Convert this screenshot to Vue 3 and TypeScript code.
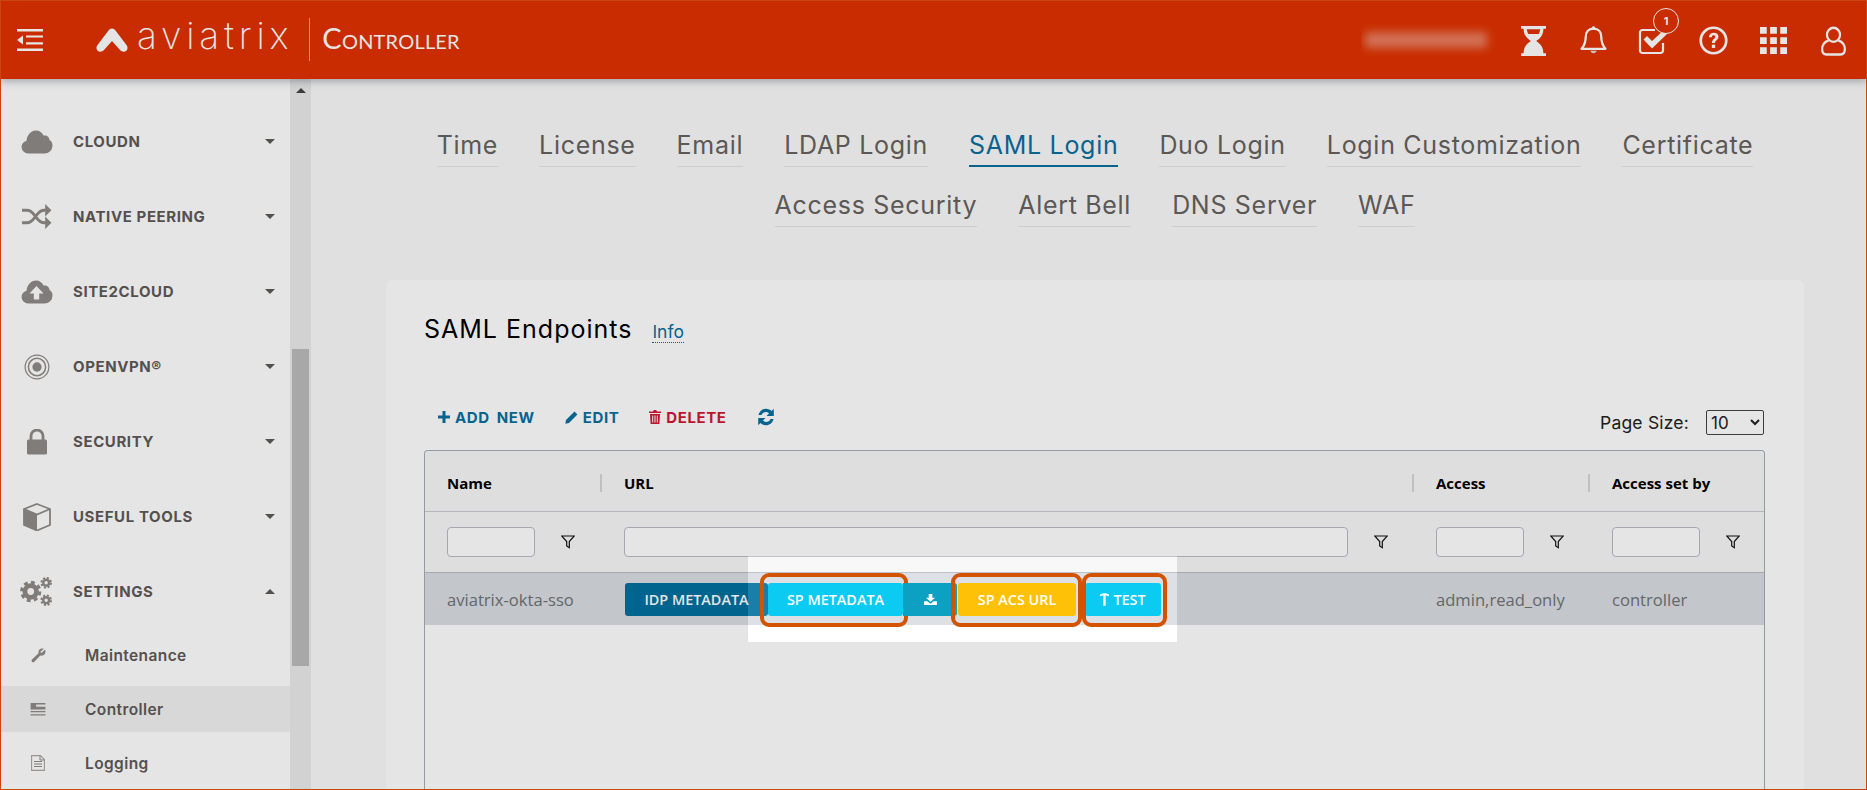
<script setup lang="ts">
const menu = [
  { label: 'CLOUDN', icon: 'cloud', open: false },
  { label: 'NATIVE PEERING', icon: 'shuffle', open: false },
  { label: 'SITE2CLOUD', icon: 'upload', open: false },
  { label: 'OPENVPN®', icon: 'target', open: false },
  { label: 'SECURITY', icon: 'lock', open: false },
  { label: 'USEFUL TOOLS', icon: 'cube', open: false },
  { label: 'SETTINGS', icon: 'gears', open: true },
]
const subs = [
  { label: 'Maintenance', icon: 'wrench', active: false },
  { label: 'Controller', icon: 'server', active: true },
  { label: 'Logging', icon: 'file', active: false },
]
const tabRows = [
  ['Time', 'License', 'Email', 'LDAP Login', 'SAML Login', 'Duo Login', 'Login Customization', 'Certificate'],
  ['Access Security', 'Alert Bell', 'DNS Server', 'WAF'],
]
const columns = ['Name', 'URL', 'Access', 'Access set by']
const filters = [
  { key: 'name', cls: 'short' },
  { key: 'url', cls: 'long' },
  { key: 'access', cls: 'short' },
  { key: 'by', cls: 'short' },
]
</script>

<template>
  <div class="root">
    <header class="topbar">
      <svg class="burger" viewBox="0 0 26 22" width="26" height="22">
        <path d="M0 0h26v2.400H0zM0 19.600h26V22H0zM9 6.400h17v2.200H9zM9 13.200h17v2.200H9z" fill="#fff" />
        <path d="M0 11 6 6.600v8.800z" fill="#fff" />
      </svg>
      <svg class="logomark" viewBox="0 0 32 24" width="32" height="24">
        <path d="M16 .5c1.500 0 2.500.8 3.500 2L30.500 17c3.500 5-2.500 9-6.500 5L16 13l-8 9c-4 4-10 0-6.500-5L12.500 2.500c1-1.200 2-2 3.500-2z" fill="#fff" />
      </svg>
      <span class="wordmark">aviatrix</span>
      <span class="divider"></span>
      <span class="product">Controller</span>
      <div class="blurred"><i></i></div>
      <div class="actions">
        <svg viewBox="0 0 24 28" width="25" height="30" preserveAspectRatio="none" class="act">
          <path d="M0 0h24v2.500h-2.500c0 6-3 9-7 11.500 4 2.500 7 5.500 7 11.500H24V28H0v-2.500h2.500c0-6 3-9 7-11.500-4-2.500-7-5.500-7-11.500H0z" fill="#fff" />
          <path d="M5.500 3c.3 1.800.8 3.200 1.500 4.500h10c.7-1.300 1.200-2.700 1.500-4.500z" fill="#df3200" />
        </svg>
        <svg viewBox="0 0 26 28" width="27" height="29" class="act">
          <path d="M13 2.500c-5 0-7.500 3.500-7.500 8 0 6-2 9-4 11.500h23c-2-2.500-4-5.500-4-11.500 0-4.500-2.500-8-7.500-8z" fill="none" stroke="#fff" stroke-width="2.200" stroke-linejoin="round" />
          <circle cx="13" cy="2" r="1.800" fill="#fff" />
          <path d="M10 24h6c-.5 3-5.500 3-6 0z" fill="#ddd" />
        </svg>
        <div class="checkwrap">
          <svg viewBox="0 0 30 28" width="30" height="28" class="act">
            <path d="M17 3H4.500A2.500 2.500 0 0 0 2 5.500v18A2.500 2.500 0 0 0 4.500 26h18a2.500 2.500 0 0 0 2.500-2.500V16" fill="none" stroke="#fff" stroke-width="2.200" />
            <path d="M5.500 12.500 9 9l5 5L26 3l3.500 3.500L14 21.500z" fill="#fff" />
          </svg>
          <span class="badge">1</span>
        </div>
        <svg viewBox="0 0 28 28" width="29" height="29" class="act">
          <circle cx="14" cy="14" r="12.300" fill="none" stroke="#fff" stroke-width="2.600" />
          <path d="M9.500 10.800c.3-3 2.300-4.300 4.800-4.300 2.700 0 4.500 1.600 4.500 3.800 0 3.200-3.300 3.300-3.300 6h-3c0-3.800 3.100-4 3.100-5.800 0-1-.8-1.500-1.500-1.500-1 0-1.500.6-1.700 1.800z" fill="#fff" />
          <rect x="12.400" y="18" width="3.200" height="3.200" fill="#fff" />
        </svg>
        <svg viewBox="0 0 26 26" width="27" height="27" class="act">
          <path fill="#fff" d="M0 0h6.500v6.500H0zM9.750 0h6.500v6.500h-6.500zM19.500 0H26v6.500h-6.500zM0 9.750h6.500v6.500H0zM9.750 9.750h6.500v6.500h-6.500zM19.500 9.750H26v6.500h-6.500zM0 19.500h6.500V26H0zM9.750 19.500h6.500V26h-6.500zM19.500 19.500H26V26h-6.500z" />
        </svg>
        <svg viewBox="0 0 26 29" width="25" height="30" preserveAspectRatio="none" class="act">
          <circle cx="13" cy="8.500" r="6.800" fill="none" stroke="#fff" stroke-width="2.300" />
          <path d="M8 14C3.500 15.500 1.200 18.500 1.200 22.500c0 3 1.500 5 4.500 5h14.600c3 0 4.500-2 4.500-5 0-4-2.300-7-6.800-8.500" fill="none" stroke="#fff" stroke-width="2.300" />
        </svg>
      </div>
    </header>

    <div class="body">
      <aside class="side">
        <nav class="menu">
          <div v-for="m in menu" :key="m.label" class="item">
            <span class="ic">
              <svg v-if="m.icon === 'cloud'" viewBox="0 0 32 24" width="32" height="24"><path d="M7 23.500a6.500 6.500 0 0 1-1.500-12.800C6 5 10 .5 15 .5c3.500 0 6.300 2 7.500 5 3.500-.5 6 1.700 6 4.500 2 1 3 3 3 5.500a8 8 0 0 1-8 8z" fill="#8f8b87" /></svg>
              <svg v-else-if="m.icon === 'shuffle'" viewBox="0 0 32 28" width="31" height="27"><path d="M1 7.500h5c5 0 6.500 3.500 9 6.500s4 6.500 9 6.500h2M1 20.500h5c5 0 6.500-3.500 9-6.500s4-6.500 9-6.500h2" fill="none" stroke="#8f8b87" stroke-width="3" /><path d="M25 1l6.500 6.500L25 14zM25 14l6.500 6.500L25 27z" fill="#8f8b87" /></svg>
              <svg v-else-if="m.icon === 'upload'" viewBox="0 0 32 24" width="32" height="24"><path d="M7 23.500a6.500 6.500 0 0 1-1.500-12.800C6 5 10 .5 15 .5c3.500 0 6.300 2 7.500 5 3.500-.5 6 1.700 6 4.500 2 1 3 3 3 5.500a8 8 0 0 1-8 8z" fill="#8f8b87" /><path d="M15.500 6l7 7.500h-4.300v6h-5.400v-6H8.500z" fill="#fff" /></svg>
              <svg v-else-if="m.icon === 'target'" viewBox="0 0 28 28" width="26" height="26"><circle cx="14" cy="14" r="12.800" fill="none" stroke="#8f8b87" stroke-width="1.300" /><circle cx="14" cy="14" r="9.300" fill="none" stroke="#8f8b87" stroke-width="1.600" /><circle cx="14" cy="14" r="5" fill="#8f8b87" /></svg>
              <svg v-else-if="m.icon === 'lock'" viewBox="0 0 20 26" width="20" height="26"><path d="M4 11V7a6 6 0 0 1 12 0v4" fill="none" stroke="#8f8b87" stroke-width="2.800" /><rect x="0" y="10.500" width="20" height="15" rx="1.500" fill="#8f8b87" /></svg>
              <svg v-else-if="m.icon === 'cube'" viewBox="0 0 28 28" width="28" height="28"><path d="M14 1 27 6v16l-13 5.500L1 22V6z" fill="none" stroke="#8f8b87" stroke-width="1.800" /><path d="M1 6l13 5.500V27.500L1 22z" fill="#8f8b87" /><path d="M1 6l13 5.500L27 6" fill="none" stroke="#8f8b87" stroke-width="1.800" /></svg>
              <svg v-else viewBox="0 0 34 30" width="33" height="29">
                <circle cx="11" cy="15" r="6" fill="none" stroke="#8f8b87" stroke-width="5" /><circle cx="11" cy="15" r="9.500" fill="none" stroke="#8f8b87" stroke-width="3" stroke-dasharray="4 3.460" />
                <circle cx="27" cy="6" r="3" fill="none" stroke="#8f8b87" stroke-width="2.500" /><circle cx="27" cy="6" r="5" fill="none" stroke="#8f8b87" stroke-width="2" stroke-dasharray="2.200 1.730" />
                <circle cx="27" cy="24" r="3" fill="none" stroke="#8f8b87" stroke-width="2.500" /><circle cx="27" cy="24" r="5" fill="none" stroke="#8f8b87" stroke-width="2" stroke-dasharray="2.200 1.730" />
              </svg>
            </span>
            <span class="lbl">{{ m.label }}</span>
            <span class="caret" :class="{ up: m.open }"></span>
          </div>
          <div class="subs">
            <div v-for="s in subs" :key="s.label" class="sub" :class="{ active: s.active }">
              <span class="subic">
                <svg v-if="s.icon === 'wrench'" viewBox="0 0 16 16" width="15" height="15"><path d="M15 1.500 11.500 5 10.500 5 10 4 13.500 1C11 -.5 7.500 1.500 8 5.500L.8 12.500c-1 1.500 1 3.500 2.500 2.500L10 8c4 1 6.500-2.500 5-6.500z" fill="#8f8b87" /></svg>
                <svg v-else-if="s.icon === 'server'" viewBox="0 0 16 14" width="16" height="13"><path d="M0 0h16v1.500H0zM0 4h16v3H0zM0 8.500h16V10H0zM0 12h16v1.500H0zM0 1.500h6v2.500H0z" fill="#8f8b87" /></svg>
                <svg v-else viewBox="0 0 14 16" width="14" height="16"><path d="M.6.6h8.800l4 4v10.800H.6z" fill="none" stroke="#aaa6a2" stroke-width="1.100" /><path d="M3 6.500h8M3 9h8M3 11.500h8M9 1v4h4" fill="none" stroke="#8f8b87" stroke-width="1" /></svg>
              </span>
              <span>{{ s.label }}</span>
            </div>
          </div>
        </nav>
        <div class="scroll">
          <span class="sarrow"></span>
          <span class="thumb"></span>
        </div>
      </aside>

      <main class="main">
        <div class="tabs">
          <div v-for="(row, i) in tabRows" :key="i" class="tabrow">
            <span v-for="t in row" :key="t" class="tab" :class="{ on: t === 'SAML Login' }">{{ t }}</span>
          </div>
        </div>

        <section class="card">
          <div class="titlebar">
            <h2>SAML Endpoints</h2>
            <a class="info">Info</a>
          </div>
          <div class="tools">
            <span class="tool blue">
              <svg viewBox="0 0 12 12" width="12" height="12"><path d="M4.500 0h3v4.500H12v3H7.500V12h-3V7.500H0v-3h4.500z" fill="#0a6f9f" /></svg>
              ADD NEW
            </span>
            <span class="tool blue edit">
              <svg viewBox="0 0 13 13" width="13" height="13"><path d="M9.500.6 12.400 3.500 4 12 .4 12.700 1 9z" fill="#0a6f9f" /></svg>
              EDIT
            </span>
            <span class="tool red del">
              <svg viewBox="0 0 12 14" width="12" height="14"><path d="M4 1.500 4.800 0h2.400L8 1.500h4v1.600H0V1.500zM1 4h10l-.6 10H1.600zM3.200 5.500v7h1v-7zM5.500 5.500v7h1v-7zM7.800 5.500v7h1v-7z" fill="#cf1a35" fill-rule="evenodd" /></svg>
              DELETE
            </span>
            <svg class="refresh" viewBox="0 0 18 18" width="20" height="20"><path d="M2.200 7.200C3 3.800 5.700 1.500 9 1.500c2 0 3.800.8 5 2.100L16 1.500V8h-6.500l2.200-2.200C11 5 10 4.500 9 4.500c-1.900 0-3.400 1.100-4.100 2.700zM15.800 10.800C15 14.200 12.300 16.500 9 16.500c-2 0-3.800-.8-5-2.100L2 16.500V10h6.500l-2.200 2.200C7 13 8 13.500 9 13.500c1.900 0 3.400-1.100 4.100-2.700z" fill="#0a6f9f" /></svg>
            <label class="pagesize">
              <span>Page Size:</span>
              <select><option>10</option><option>25</option></select>
            </label>
          </div>

          <div class="table">
            <div class="row head">
              <div v-for="c in columns" :key="c" class="cell">{{ c }}</div>
            </div>
            <div class="row filter">
              <div v-for="f in filters" :key="f.key" class="cell">
                <input type="text" :class="f.cls" />
                <svg class="funnel" viewBox="0 0 14 14" width="14" height="14"><path d="M.7 1h12.600L8.300 6.500v6.200L5.700 11V6.500z" fill="none" stroke="#111" stroke-width="1.200" /></svg>
              </div>
            </div>
            <div class="row data">
              <div class="cell">aviatrix-okta-sso</div>
              <div class="cell btns">
                <button class="btn idp">IDP METADATA</button>
                <button class="btn sp">SP METADATA</button>
                <button class="btn dl">
                  <svg viewBox="0 0 14 12" width="13" height="11"><path d="M5 0h4v4h3L7 8.500 2 4h3zM0 8h3.500L7 10.500 10.500 8H14v4H0z" fill="#fff" /></svg>
                </button>
                <button class="btn acs">SP ACS URL</button>
                <button class="btn test">
                  <svg viewBox="0 0 10 15" width="9" height="14"><path d="M0 2.500C3 .5 7 .5 10 2.500V4.500C9 4 7.500 3.700 6.300 3.600V15H3.700V3.600C2.500 3.700 1 4 0 4.500z" fill="#fff" /></svg>
                  TEST
                </button>
              </div>
              <div class="cell">admin,read_only</div>
              <div class="cell">controller</div>
            </div>
          </div>
        </section>
      </main>
    </div>

    <div class="spot"></div>
    <div class="frame"></div>
  </div>
</template>

<style scoped>
.root {
  position: relative;
  width: 1867px;
  height: 790px;
  overflow: hidden;
  display: flex;
  flex-direction: column;
  background: #fafafa;
  font-family: Inter, "Liberation Sans", sans-serif;
}
.topbar {
  height: 79px;
  flex: none;
  background: #df3200;
  display: flex;
  align-items: center;
  position: relative;
  z-index: 1;
  box-shadow: 0 2px 8px rgba(60, 70, 80, 0.4);
  color: #fff;
  padding-right: 21px;
}
.burger { margin-left: 17px; }
.logomark { margin-left: 53px; }
.wordmark {
  margin-left: 9px;
  font-family: Inter, sans-serif;
  font-weight: 200;
  font-size: 37px;
  letter-spacing: 4.800px;
  line-height: 1;
  margin-top: -8px;
}
.divider {
  width: 1px;
  height: 43px;
  background: rgba(255, 255, 255, 0.55);
  margin-left: 16px;
}
.product {
  margin-left: 12px;
  font-family: Lato, sans-serif;
  font-variant: small-caps;
  font-size: 29px;
  letter-spacing: 0.2px;
  margin-top: -5px;
}
.blurred {
  margin-left: auto;
  width: 136px;
  height: 40px;
  display: flex;
  align-items: center;
  overflow: hidden;
}
.blurred i {
  display: block;
  margin-left: 4px;
  width: 122px;
  height: 16px;
  background: rgba(255, 255, 255, 0.38);
  filter: blur(5px);
}
.actions {
  margin-left: 24px;
  display: flex;
  align-items: center;
  margin-top: 2px;
}
.act { display: block; }
.actions > :nth-child(2) { margin-left: 34px; }
.actions > :nth-child(3) { margin-left: 31px; }
.actions > :nth-child(4) { margin-left: 31px; }
.actions > :nth-child(5) { margin-left: 32px; }
.actions > :nth-child(6) { margin-left: 34px; }
.checkwrap { position: relative; }
.badge {
  position: absolute;
  left: 15px;
  top: -19px;
  width: 26px;
  height: 26px;
  box-sizing: border-box;
  border: 1px solid #fff;
  border-radius: 50%;
  background: #df3200;
  font-size: 11px;
  font-weight: 700;
  text-align: center;
  line-height: 24px;
}
.body {
  flex: 1;
  min-height: 0;
  display: flex;
}
.side {
  width: 311px;
  flex: none;
  display: flex;
  background: #fff;
}
.menu {
  flex: 1;
  padding-top: 25px;
  font-family: Inter, sans-serif;
}
.item {
  height: 75px;
  display: flex;
  align-items: center;
  color: #5f5a57;
  font-size: 15px;
  font-weight: 700;
}
.ic {
  width: 73px;
  box-sizing: border-box;
  display: flex;
  justify-content: center;
  flex: none;
}
.lbl { flex: 1; letter-spacing: 0.6px; }
.caret {
  width: 0;
  height: 0;
  margin-right: 15px;
  border-left: 5px solid transparent;
  border-right: 5px solid transparent;
  border-top: 5px solid #5f5a57;
}
.caret.up {
  border-top: 0;
  border-bottom: 5px solid #5f5a57;
}
.subs { margin-top: -1px; }
.sub {
  height: 54px;
  display: flex;
  align-items: center;
  color: #5f5a57;
  font-size: 15.500px;
  font-weight: 600;
  letter-spacing: 0.4px;
}
.sub.active {
  background: #f1f1f1;
  height: 46px;
  margin: 4px 0;
}
.subic {
  width: 85px;
  padding-left: 17px;
  box-sizing: border-box;
  padding-right: 26px;
  display: flex;
  justify-content: center;
  flex: none;
}
.scroll {
  width: 21px;
  flex: none;
  background: #eaeaea;
  position: relative;
}
.sarrow {
  position: absolute;
  top: 9px;
  left: 6px;
  border-left: 5px solid transparent;
  border-right: 5px solid transparent;
  border-bottom: 5px solid #444;
}
.thumb {
  position: absolute;
  left: 2px;
  right: 2px;
  top: 270px;
  height: 317px;
  background: #bbb;
}
.main {
  flex: 1;
  min-width: 0;
  padding: 36px 63px 0 75px;
  display: flex;
  flex-direction: column;
}
.tabs {
  width: 1418px;
}
.tabrow {
  display: flex;
  justify-content: center;
  gap: 41px;
  height: 60px;
}
.tab {
  height: 52px;
  box-sizing: border-box;
  padding-top: 16px;
  font-size: 25px;
  line-height: 28px;
  color: #66625f;
  border-bottom: 1px solid #e6e6e6;
  font-weight: 400;
  letter-spacing: 0.7px;
}
.tab.on {
  color: #0a6f9f;
  border-bottom: 2px solid #0a6f9f;
}
.card {
  margin-top: 45px;
  flex: 1;
  background: #fff;
  border-radius: 6px 6px 0 0;
  padding: 0 39px 0 38px;
  display: flex;
  flex-direction: column;
}
.titlebar {
  display: flex;
  align-items: baseline;
  padding-top: 33px;
  height: 33px;
  flex: none;
}
.titlebar h2 {
  margin: 0;
  font-weight: 400;
  font-size: 25px;
  line-height: 33px;
  color: #000;
  letter-spacing: 1px;
}
.info {
  margin-left: 20px;
  font-size: 17.500px;
  color: #0a6f9f;
  border-bottom: 1px dotted #0a6f9f;
  line-height: 20px;
}
.tools {
  margin-top: 56px;
  height: 30px;
  display: flex;
  align-items: center;
  position: relative;
  padding-left: 14px;
  font-size: 15px;
  font-weight: 700;
  letter-spacing: 0.6px;
  word-spacing: 3px;
  flex: none;
  margin-bottom: 12px;
}
.tool {
  display: flex;
  align-items: center;
  gap: 5px;
}
.blue { color: #0a6f9f; }
.red { color: #cf1a35; }
.edit { margin-left: 30px; }
.del { margin-left: 30px; }
.refresh { margin-left: 29px; }
.pagesize {
  position: absolute;
  right: 1px;
  top: 8px;
  display: flex;
  align-items: center;
  gap: 17px;
  font-weight: 400;
  font-size: 17.500px;
  letter-spacing: 0.2px;
  word-spacing: normal;
  color: #222;
}
.pagesize select {
  width: 58px;
  height: 25px;
  font-family: Inter, sans-serif;
  font-size: 17px;
  background: #fff;
  color: #222;
  border: 1px solid #444;
  border-radius: 2px;
  padding: 0;
}
.table {
  flex: 1;
  border: 1px solid #a6abb3;
  border-bottom: 0;
  border-radius: 4px 4px 0 0;
  font-family: "Open Sans", sans-serif;
  margin-top: 6px;
}
.row {
  display: grid;
  grid-template-columns: 177px 812px 176px 1fr;
}
.cell {
  padding-left: 22px;
  position: relative;
}
.head {
  height: 61px;
  box-sizing: border-box;
  padding-top: 3px;
  background: #f8f8f8;
  border-bottom: 1px solid #c8ccd2;
  align-items: center;
  font-weight: 700;
  font-size: 15px;
  color: #000;
  border-radius: 4px 4px 0 0;
}
.head .cell::after {
  content: "";
  position: absolute;
  right: 0;
  top: 1px;
  width: 2.500px;
  height: 18px;
  background: #d4d6d9;
}
.head .cell:last-child::after { display: none; }
.filter {
  height: 60px;
  background: #f8f8f8;
  border-bottom: 1px solid #b8bcc3;
  align-items: center;
}
.filter .cell {
  display: flex;
  align-items: center;
}
.filter input {
  box-sizing: border-box;
  height: 30px;
  background: #fff;
  border: 1px solid #b8bcc3;
  border-radius: 4px;
  padding: 0;
}
.filter input.short { width: 88px; }
.filter input.long { width: 724px; }
.funnel { margin-left: 26px; }
.data {
  height: 52px;
  background: #dadde1;
  align-items: center;
  font-size: 16.600px;
  color: #6f7378;
}
.btns {
  display: flex;
  align-items: center;
  padding-left: 23px;
}
.btn {
  height: 33px;
  border: 0;
  padding: 0;
  border-radius: 3px;
  font-family: "Open Sans", sans-serif;
  font-weight: 600;
  font-size: 14.400px;
  color: #fff;
  display: flex;
  align-items: center;
  justify-content: center;
  gap: 4px;
  position: relative;
}
.btn::after {
  content: "";
  position: absolute;
  border: 4px solid #d35400;
  border-radius: 9px;
  display: none;
  top: -10px;
  bottom: -11px;
}
.idp {
  width: 143px;
  background: #00719f;
}
.sp {
  width: 135px;
  background: #0ccbf3;
  z-index: 3;
}
.sp::after { display: block; left: -8px; right: -5px; }
.dl {
  width: 54px;
  background: #0ca1c2;
  border-radius: 0 3px 3px 0;
  z-index: 3;
}
.acs {
  width: 118px;
  margin-left: 1px;
  background: #ffc107;
  z-index: 3;
}
.acs::after { display: block; left: -7px; right: -6px; }
.test {
  width: 76px;
  margin-left: 9px;
  background: #0ccbf3;
  z-index: 3;
}
.test::after { display: block; left: -3px; right: -6px; }
.spot {
  position: absolute;
  left: 748px;
  top: 556px;
  width: 429px;
  height: 86px;
  background: rgba(255, 255, 255, 0.1);
  box-shadow: 0 0 0 3000px rgba(0, 0, 0, 0.1);
  z-index: 2;
}
.frame {
  position: absolute;
  inset: 0;
  border: 1px solid #c9470f;
  z-index: 4;
  pointer-events: none;
}
</style>
